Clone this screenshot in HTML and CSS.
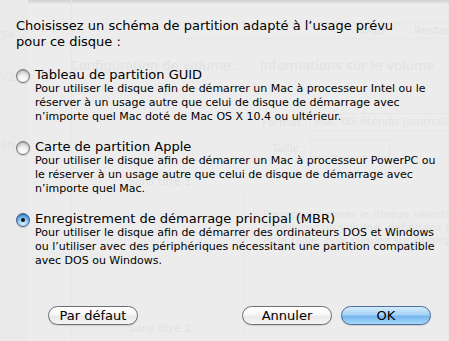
FILE: index.html
```html
<!DOCTYPE html>
<html lang="fr">
<head>
<meta charset="utf-8">
<title>Options de partition</title>
<link rel="stylesheet" href="styles.css">
</head>
<body>
<div class="ghost" aria-hidden="true">
  <div class="g-col g-col1"></div>
  <div class="g-col g-col2"></div>
  <div class="g-col g-col3"></div>
  <div class="g-tabs"><span class="g-raid">RAID</span><span class="g-rest">Restaurer</span></div>
  <span class="g-t g-54">54</span>
  <span class="g-t g-v2">V2</span>
  <span class="g-t g-3n">3N</span>
  <span class="g-t g-conf">Configuration de volume :</span>
  <span class="g-t g-info">Informations sur le volume</span>
  <span class="g-t g-format">Format :</span>
  <span class="g-field g-f1">Mac OS étendu (journalisé)</span>
  <span class="g-t g-taille">Taille :</span>
  <span class="g-field g-f2"></span>
  <span class="g-t g-sans1">Sans titre 1</span>
  <span class="g-t g-p1">Pour partitionner le disque sélectionné,</span>
  <span class="g-t g-p2">choisissez un volume, définissez le nom</span>
  <span class="g-t g-p3">et la taille, puis cliquez sur Appliquer.</span>
  <span class="g-t g-sans2">Sans titre 2</span>
</div>

<main class="sheet">
  <p class="heading">Choisissez un schéma de partition adapté à l’usage prévu<br>pour ce disque :</p>

  <div class="options">
    <div class="option">
      <span class="radio"></span>
      <div class="text">
        <div class="label">Tableau de partition GUID</div>
        <div class="desc">Pour utiliser le disque afin de démarrer un Mac à processeur Intel ou le<br>réserver à un usage autre que celui de disque de démarrage avec<br>n’importe quel Mac doté de Mac OS X 10.4 ou ultérieur.</div>
      </div>
    </div>
    <div class="option">
      <span class="radio"></span>
      <div class="text">
        <div class="label">Carte de partition Apple</div>
        <div class="desc">Pour utiliser le disque afin de démarrer un Mac à processeur PowerPC ou<br>le réserver à un usage autre que celui de disque de démarrage avec<br>n’importe quel Mac.</div>
      </div>
    </div>
    <div class="option">
      <span class="radio checked"></span>
      <div class="text">
        <div class="label">Enregistrement de démarrage principal (MBR)</div>
        <div class="desc">Pour utiliser le disque afin de démarrer des ordinateurs DOS et Windows<br>ou l’utiliser avec des périphériques nécessitant une partition compatible<br>avec DOS ou Windows.</div>
      </div>
    </div>
  </div>

  <div class="buttons">
    <button class="btn">Par défaut</button>
    <div class="right">
      <button class="btn">Annuler</button>
      <button class="btn default">OK</button>
    </div>
  </div>
</main>
</body>
</html>
```

FILE: styles.css
```css
html, body {
  margin: 0;
  padding: 0;
}
body {
  width: 449px;
  height: 341px;
  overflow: hidden;
  position: relative;
  background: #ececec;
  font-family: "DejaVu Sans", "Noto Sans", sans-serif;
  color: #000;
  box-shadow: inset 0 3px 3px -1px rgba(0,0,0,0.12);
}

/* faint window behind the translucent sheet */
.ghost {
  position: absolute;
  inset: 0;
  overflow: hidden;
  color: #e2e2e2;
  font-size: 11px;
  line-height: 13px;
  pointer-events: none;
}
.g-col { position: absolute; top: 0; bottom: 0; }
.g-col1 { left: 0; width: 28px; background: #eaeaea; }
.g-col2 { left: 28px; width: 43px; border-right: 1px solid #e7e7e7; }
.g-col3 { left: 244px; width: 0; border-right: 1px solid #e9e9e9; top: 190px; }
.g-tabs {
  position: absolute;
  left: 170px; top: 22px; width: 290px; height: 15px;
  border: 1px solid #e6e6e6; border-radius: 3px;
}
.g-raid { position: absolute; left: 188px; top: 1px; }
.g-rest { position: absolute; left: 243px; top: 1px; }
.g-t { position: absolute; white-space: nowrap; }
.g-54 { left: 0; top: 29px; }
.g-v2 { left: 0; top: 71px; }
.g-3n { left: 0; top: 139px; }
.g-conf { left: 70px; top: 58px; font-size: 13px; line-height: 15px; }
.g-info { left: 260px; top: 58px; font-size: 13px; line-height: 15px; }
.g-format { left: 262px; top: 116px; }
.g-field { position: absolute; border: 1px solid #e6e6e6; white-space: nowrap; padding: 0 4px; }
.g-f1 { left: 310px; top: 113px; width: 150px; height: 16px; line-height: 16px; }
.g-taille { left: 272px; top: 142px; }
.g-f2 { left: 310px; top: 139px; width: 70px; height: 16px; }
.g-sans1 { left: 128px; top: 175px; }
.g-p1 { left: 263px; top: 208px; }
.g-p2 { left: 263px; top: 221px; }
.g-p3 { left: 263px; top: 234px; }
.g-sans2 { left: 128px; top: 322px; }

/* sheet */
.sheet {
  position: relative;
  padding: 18px 18px 0 16px;
}
.heading {
  margin: 0;
  font-size: 13px;
  line-height: 16px;
}
.options {
  margin-top: 18px;
  display: flex;
  flex-direction: column;
  gap: 16px;
}
.option {
  display: flex;
  gap: 5px;
}
.radio {
  flex: none;
  width: 12px;
  height: 12px;
  margin-top: 1px;
  border-radius: 50%;
  border: 1px solid #777;
  background: radial-gradient(circle at 50% 80%, #ffffff 0%, #f2f2f2 35%, #cdcdcd 78%, #b0b0b0 100%);
  box-shadow: 0 1px 1px rgba(0,0,0,0.15), inset 0 1px 1px rgba(0,0,0,0.2);
  position: relative;
}
.radio.checked {
  border-color: #3f5f8f;
  background: radial-gradient(circle at 50% 80%, #d8f0ff 0%, #9fd0f4 35%, #4b97dc 75%, #3a7cc4 100%);
}
.radio.checked::after {
  content: "";
  position: absolute;
  left: 4px; top: 4px;
  width: 4px; height: 4px;
  border-radius: 50%;
  background: #111;
}
.label {
  font-size: 13px;
  line-height: 14px;
}
.desc {
  font-size: 11px;
  line-height: 14px;
  white-space: nowrap;
}

/* buttons */
.buttons {
  margin-top: 38px;
  padding-left: 32px;
  display: flex;
  justify-content: space-between;
  align-items: center;
}
.right {
  display: flex;
  gap: 9px;
}
.btn {
  font-family: inherit;
  font-size: 13px;
  line-height: 15px;
  width: 90px;
  height: 19px;
  padding: 0;
  border: 1px solid #6f6f6f;
  border-radius: 10px;
  color: #000;
  background: linear-gradient(#ffffff 0%, #f7f7f7 45%, #e9e9e9 55%, #f5f5f5 100%);
  box-shadow: 0 1px 1px rgba(0,0,0,0.12);
}
.btn.default {
  border-color: #4d6d9a;
  background: linear-gradient(#d4ecfc 0%, #a5d3f6 45%, #74b6ee 55%, #a6d8fb 100%);
}
```
